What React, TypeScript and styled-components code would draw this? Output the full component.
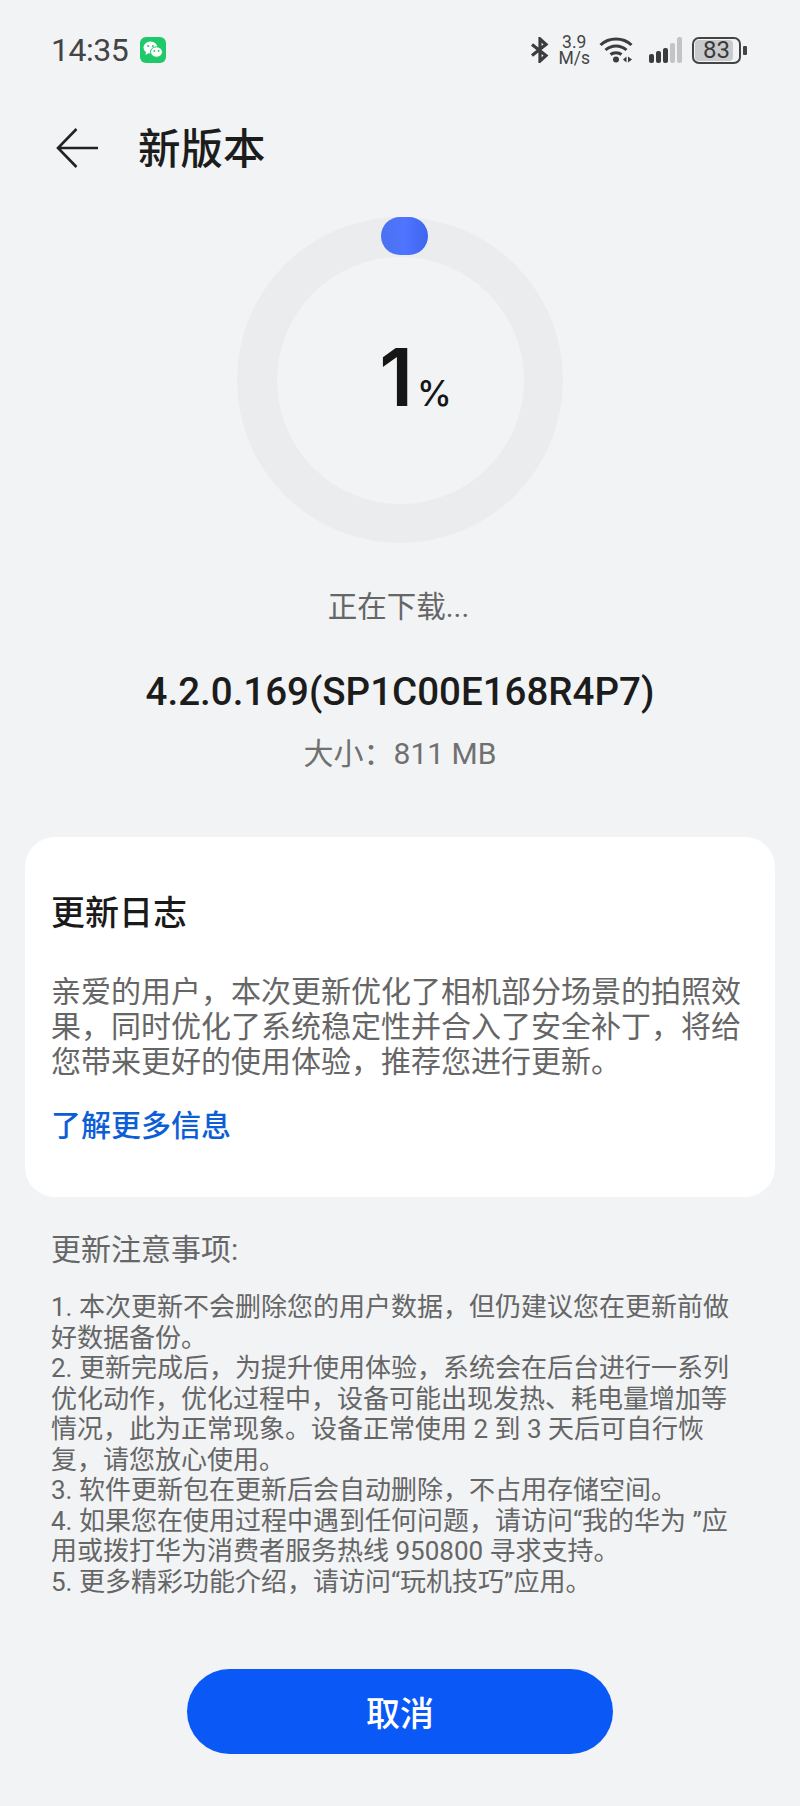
import React from "react";
import styled, { createGlobalStyle } from "styled-components";

const GlobalStyle = createGlobalStyle`
  html, body {
    margin: 0;
    padding: 0;
    background: #f1f3f5;
  }
  body {
    font-family: "Roboto", "Noto Sans CJK SC", sans-serif;
  }
`;

const App = () => {
  return (
    <Page>
      <GlobalStyle />
      <StatusBar>
        <StatusLeft>
          <Clock>14:35</Clock>
          <WeChatBadge>
            <svg width="20" height="18" viewBox="0 0 20 18">
              <ellipse cx="7.5" cy="6.5" rx="7" ry="6" fill="#fff" />
              <path d="M3 10.5 L2.5 14 L6.5 11.5 Z" fill="#fff" />
              <ellipse cx="13.5" cy="11" rx="6" ry="5.2" fill="#fff" stroke="#1fc969" strokeWidth="1" />
              <circle cx="5.2" cy="5" r="1" fill="#1fc969" />
              <circle cx="9.8" cy="5" r="1" fill="#1fc969" />
              <circle cx="11.4" cy="10" r="0.9" fill="#1fc969" />
              <circle cx="15.6" cy="10" r="0.9" fill="#1fc969" />
            </svg>
          </WeChatBadge>
        </StatusLeft>
        <StatusRight>
          <svg width="19" height="26" viewBox="0 0 19 26">
            <path d="M2 7.5 L16 18.5 L10 24 V2 L16 7.5 L2 18.5" fill="none" stroke="#3c3c3c" strokeWidth="3.2" />
          </svg>
          <NetSpeed>
            <span>3.9</span>
            <span>M/s</span>
          </NetSpeed>
          <svg width="34" height="26" viewBox="0 0 34 26">
            <path d="M1.5 8 C10 0 24 0 32.5 8" fill="none" stroke="#3c3c3c" strokeWidth="3" />
            <path d="M6.5 13 C12.5 7.5 21.5 7.5 27.5 13" fill="none" stroke="#3c3c3c" strokeWidth="3" />
            <path d="M11.5 17.5 C14.5 15 19.5 15 22.5 17.5" fill="none" stroke="#3c3c3c" strokeWidth="3" />
            <circle cx="17" cy="22.5" r="3" fill="#3c3c3c" />
            <path d="M24 22.5 L27.5 19.5 V25.5 Z M29 19.5 L33 22.5 L29 25.5 Z" fill="#3c3c3c" />
          </svg>
          <SignalBars>
            <Bar $h={9} />
            <Bar $h={12} />
            <Bar $h={15} />
            <Bar $h={20} $off />
            <Bar $h={26} $off />
          </SignalBars>
          <BatteryWrap>
            <Battery>
              <BatteryFill />
              <BatteryValue>83</BatteryValue>
            </Battery>
            <BatteryTip />
          </BatteryWrap>
        </StatusRight>
      </StatusBar>

      <Header>
        <BackButton>
          <svg width="43" height="40" viewBox="0 0 43 40">
            <path d="M1.5 20 H42 M20.5 1 L2 20 L20.5 39" fill="none" stroke="#222" strokeWidth="2.6" />
          </svg>
        </BackButton>
        <Title>新版本</Title>
      </Header>

      <ProgressWrap>
        <Ring>
          <RingHole>
            <Percent>
              1<small>%</small>
            </Percent>
          </RingHole>
          <Knob />
        </Ring>
      </ProgressWrap>

      <Status>正在下载...</Status>
      <Version>4.2.0.169(SP1C00E168R4P7)</Version>
      <Size>大小：811 MB</Size>

      <Card>
        <CardTitle>更新日志</CardTitle>
        <CardBody>
          亲爱的用户，本次更新优化了相机部分场景的拍照效果，同时优化了系统稳定性并合入了安全补丁，将给您带来更好的使用体验，推荐您进行更新。
        </CardBody>
        <MoreLink>了解更多信息</MoreLink>
      </Card>

      <Notes>
        <NotesTitle>更新注意事项:</NotesTitle>
        <NotesList>
          <p>1. 本次更新不会删除您的用户数据，但仍建议您在更新前做好数据备份。</p>
          <p>
            2. 更新完成后，为提升使用体验，系统会在后台进行一系列优化动作，优化过程中，设备可能出现发热、耗电量增加等情况，此为正常现象。设备正常使用 2 到 3 天后可自行恢复，请您放心使用。
          </p>
          <p>3. 软件更新包在更新后会自动删除，不占用存储空间。</p>
          <p>4. 如果您在使用过程中遇到任何问题，请访问“我的华为 ”应用或拨打华为消费者服务热线 950800 寻求支持。</p>
          <p>5. 更多精彩功能介绍，请访问“玩机技巧”应用。</p>
        </NotesList>
      </Notes>

      <Footer>
        <CancelButton>取消</CancelButton>
      </Footer>
    </Page>
  );
};

const Page = styled.div`
  width: 800px;
  height: 1806px;
  overflow: hidden;
  background: #f1f3f5;
  display: flex;
  flex-direction: column;
  align-items: center;
`;

const StatusBar = styled.div`
  width: 100%;
  box-sizing: border-box;
  height: 100px;
  padding: 0 53px 0 51px;
  display: flex;
  align-items: center;
  justify-content: space-between;
`;
const StatusLeft = styled.div`
  display: flex;
  align-items: center;
  gap: 12px;
`;
const Clock = styled.div`
  font-size: 32px;
  color: #444;
  letter-spacing: -0.5px;
`;
const WeChatBadge = styled.div`
  width: 26px;
  height: 26px;
  border-radius: 6px;
  background: #1fc969;
  display: flex;
  align-items: center;
  justify-content: center;
`;
const StatusRight = styled.div`
  display: flex;
  align-items: center;
  gap: 9px;
`;
const NetSpeed = styled.div`
  display: flex;
  flex-direction: column;
  align-items: center;
  font-size: 17.5px;
  line-height: 16px;
  color: #444;
`;
const SignalBars = styled.div`
  display: flex;
  align-items: flex-end;
  gap: 2px;
  margin-left: 7px;
`;
const Bar = styled.div<{ $h: number; $off?: boolean }>`
  width: 5px;
  height: ${(p) => p.$h}px;
  border-radius: 2px;
  background: ${(p) => (p.$off ? "#c2c4c6" : "#3c3c3c")};
`;
const BatteryWrap = styled.div`
  display: flex;
  align-items: center;
  gap: 2px;
  margin-left: 1px;
`;
const Battery = styled.div`
  position: relative;
  box-sizing: border-box;
  width: 49px;
  height: 27px;
  border: 2px solid #444;
  border-radius: 7px;
  display: flex;
  align-items: center;
  justify-content: center;
  overflow: hidden;
`;
const BatteryFill = styled.div`
  position: absolute;
  inset: 1px 6px 1px 1px;
  border-radius: 4px;
  background: #c8cacc;
`;
const BatteryValue = styled.span`
  position: relative;
  font-size: 24px;
  color: #3a3a3a;
`;
const BatteryTip = styled.div`
  width: 4px;
  height: 9px;
  border-radius: 1px;
  background: #444;
`;

const Header = styled.div`
  width: 100%;
  box-sizing: border-box;
  height: 100px;
  padding: 0 0 4px 56px;
  display: flex;
  align-items: center;
  gap: 39px;
`;
const BackButton = styled.div`
  width: 43px;
  height: 40px;
`;
const Title = styled.div`
  font-size: 42.5px;
  font-weight: 500;
  color: #1c1c1c;
  margin-bottom: 5px;
`;

const ProgressWrap = styled.div`
  margin-top: 17px;
  display: flex;
  justify-content: center;
`;
const Ring = styled.div`
  position: relative;
  width: 326px;
  height: 326px;
  border-radius: 50%;
  background: #ebecee;
  display: flex;
  align-items: center;
  justify-content: center;
`;
const RingHole = styled.div`
  width: 247px;
  height: 247px;
  border-radius: 50%;
  background: #f1f3f5;
  display: flex;
  align-items: center;
  justify-content: center;
`;
const Knob = styled.div`
  position: absolute;
  top: 0;
  left: 144px;
  width: 47px;
  height: 38px;
  border-radius: 19px;
  background: linear-gradient(90deg, #4a72f0, #4f74ff 50%, #3f66f0);
`;
const Percent = styled.div`
  font-family: "Inter", "Roboto", sans-serif;
  font-size: 80px;
  font-weight: 600;
  color: #161616;
  line-height: 1;
  margin: 0 0 6px 31px;
  small {
    font-size: 35px;
    font-weight: 500;
    margin-left: 4px;
  }
`;

const Status = styled.div`
  margin: 44px 3px 0 0;
  font-size: 29.5px;
  line-height: 40px;
  color: #666;
`;
const Version = styled.div`
  margin-top: 40px;
  font-size: 38.5px;
  line-height: 50px;
  font-weight: 500;
  color: #1c1c1c;
`;
const Size = styled.div`
  margin-top: 17px;
  font-size: 30px;
  line-height: 40px;
  color: #707070;
`;

const Card = styled.div`
  margin-top: 63px;
  width: 750px;
  height: 360px;
  box-sizing: border-box;
  padding: 54px 26px 0;
  border-radius: 30px;
  background: #fff;
`;
const CardTitle = styled.div`
  font-size: 34px;
  line-height: 44px;
  font-weight: 500;
  color: #1a1a1a;
`;
const CardBody = styled.div`
  margin-top: 39px;
  font-size: 30px;
  line-height: 35px;
  color: #666;
`;
const MoreLink = styled.div`
  margin-top: 27px;
  font-size: 30px;
  line-height: 40px;
  font-weight: 500;
  color: #0d5ed6;
`;

const Notes = styled.div`
  width: 100%;
  box-sizing: border-box;
  padding: 33px 52px 0 51px;
`;
const NotesTitle = styled.div`
  font-size: 30px;
  line-height: 40px;
  color: #666;
`;
const NotesList = styled.div`
  margin-top: 22px;
  font-size: 26px;
  line-height: 30.5px;
  color: #666;
  p {
    margin: 0;
  }
`;

const Footer = styled.div`
  margin-top: auto;
  padding-bottom: 52px;
`;
const CancelButton = styled.div`
  width: 426px;
  height: 85px;
  border-radius: 43px;
  background: #0a59f7;
  color: #fff;
  font-size: 34px;
  font-weight: 500;
  display: flex;
  align-items: center;
  justify-content: center;
`;

export default App;
